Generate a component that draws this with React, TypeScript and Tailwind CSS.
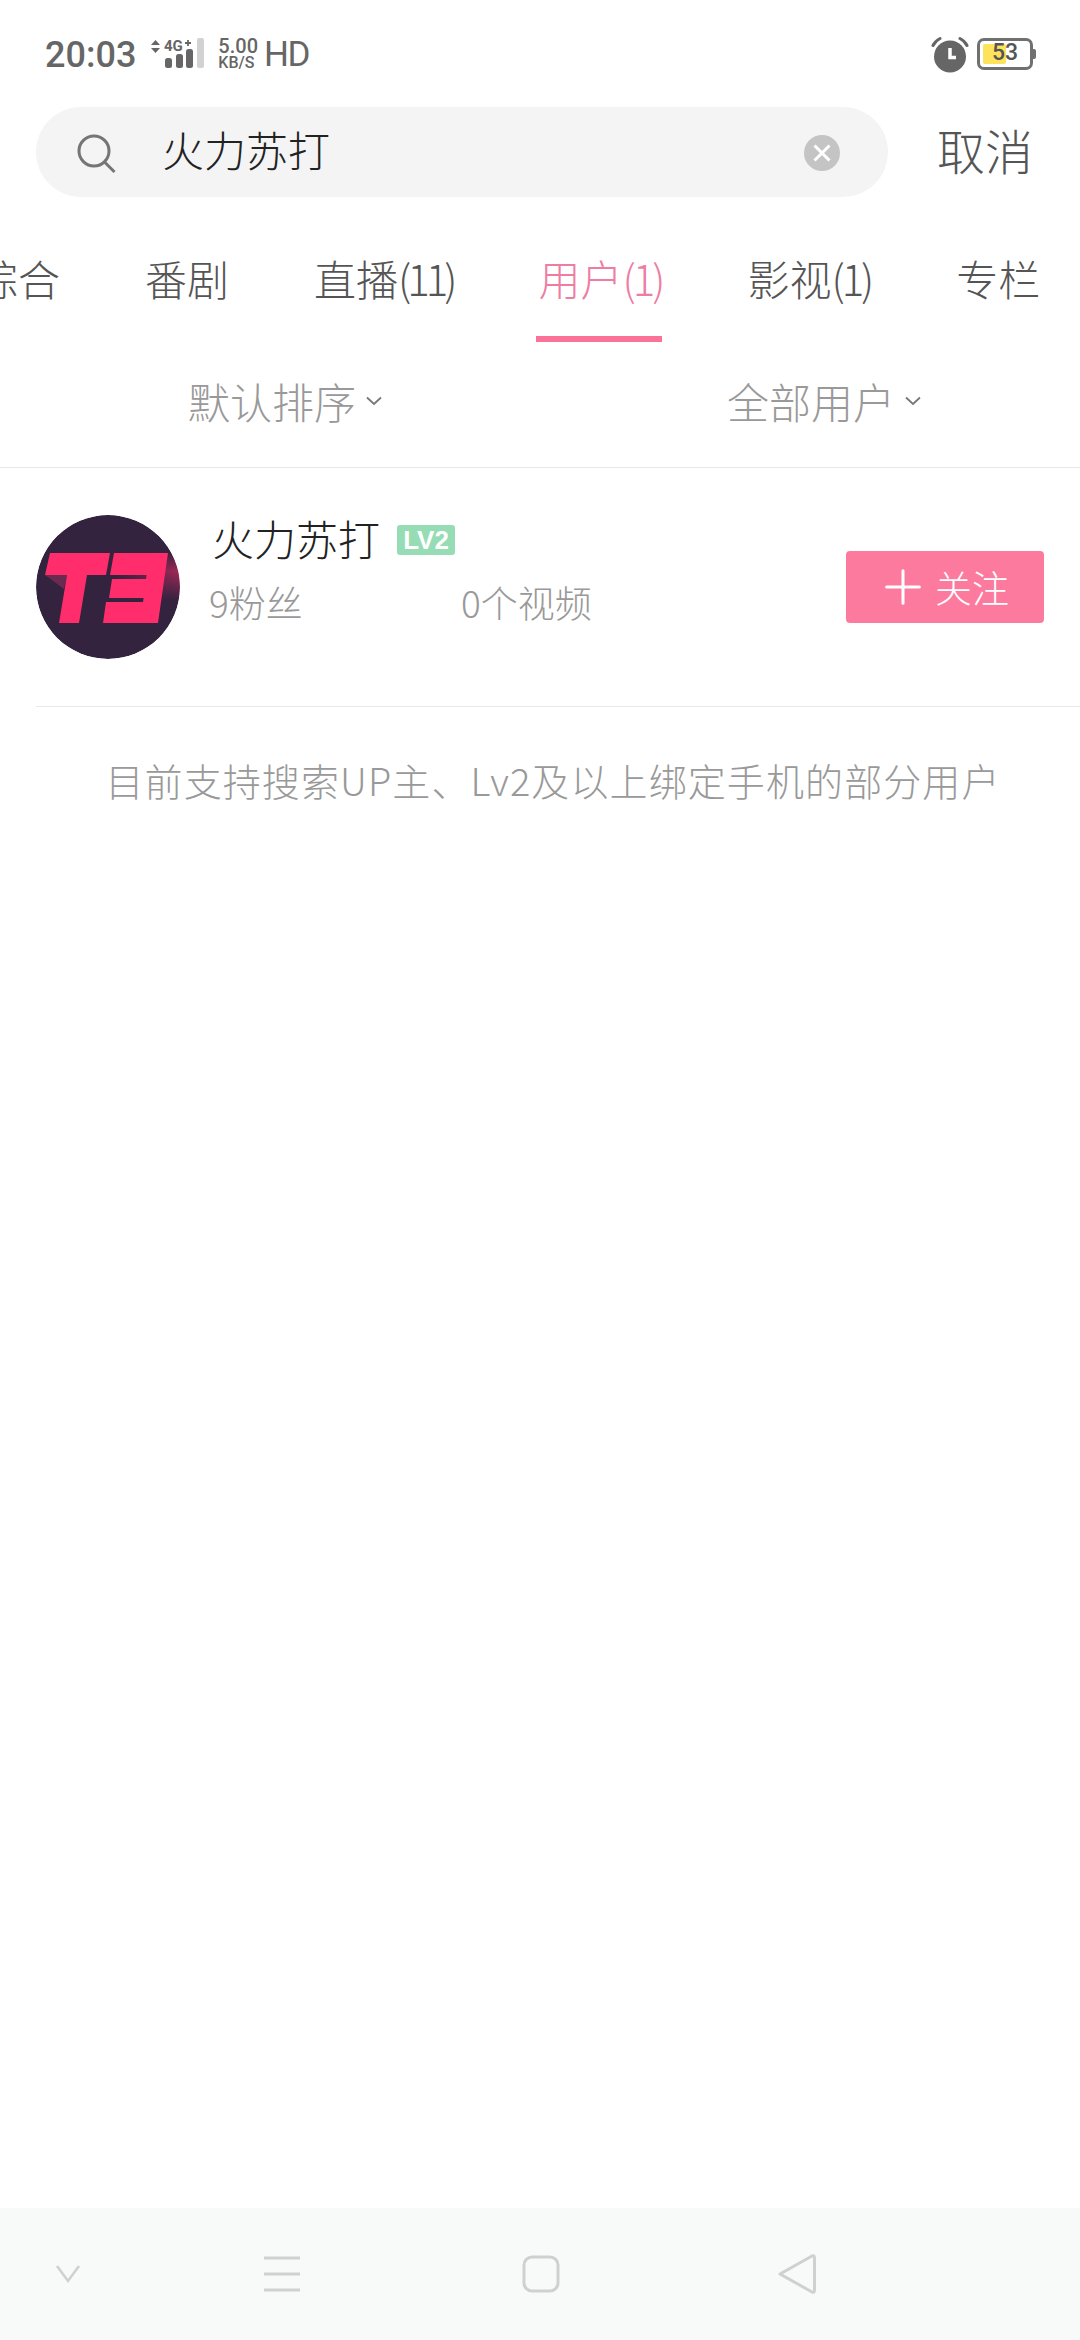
import { Plus } from 'lucide-react';

const tabs = [
  { label: '综合', count: '', tight: '' },
  { label: '番剧', count: '', tight: '' },
  { label: '直播', count: '(11)', tight: 'tracking-[-4px]' },
  { label: '用户', count: '(1)', tight: 'tracking-[-3px]', active: true },
  { label: '影视', count: '(1)', tight: 'tracking-[-3px]' },
  { label: '专栏', count: '', tight: '' },
];

const cjk = "font-['Noto_Sans_CJK_SC','Noto_Sans',sans-serif]";
const roboto = "font-['Roboto',sans-serif]";

function SignalIcon() {
  return (
    <svg width="62" height="34" viewBox="0 0 62 34" className="shrink-0">
      <path d="M3 8l4.500-5 4.500 5zM3 11h9l-4.500 5z" fill="#666" />
      <text x="16" y="14" fontSize="15" fontWeight="700" fill="#666" fontFamily="Roboto, sans-serif">4G</text>
      <path d="M37 6h6M40 3v6" stroke="#666" strokeWidth="1.800" />
      <rect x="17" y="21" width="7" height="10" rx="2.500" fill="#666" />
      <rect x="28" y="17" width="7" height="14" rx="2.500" fill="#666" />
      <rect x="38" y="12" width="7" height="19" rx="2.500" fill="#666" />
      <rect x="49" y="1" width="7" height="30" rx="2" fill="#d2d2d2" />
    </svg>
  );
}

function AlarmIcon() {
  return (
    <svg width="38" height="38" viewBox="0 0 38 38" className="shrink-0">
      <circle cx="19" cy="21.500" r="16" fill="#666" />
      <path d="M2 10.500C3.500 7.500 6 5 9 3.500M36 10.500C34.500 7.500 32 5 29 3.500" stroke="#666" strokeWidth="3" fill="none" strokeLinecap="round" />
      <path d="M19 13v9.500h6" stroke="#fff" strokeWidth="3.500" fill="none" />
    </svg>
  );
}

function Chevron() {
  return (
    <svg width="16" height="10" viewBox="0 0 16 10" className="shrink-0">
      <path d="M1 1.500l7 6.500 7-6.500" stroke="#777" strokeWidth="1.800" fill="none" />
    </svg>
  );
}

function T3Logo() {
  return (
    <svg width="144" height="144" viewBox="0 0 144 144" className="shrink-0 rounded-full">
      <defs>
        <linearGradient id="band" x1="0" y1="0" x2="1" y2="0">
          <stop offset="0.550" stopColor="#ff2d6b" stopOpacity="0" />
          <stop offset="1" stopColor="#ff2d6b" stopOpacity="0.550" />
        </linearGradient>
        <linearGradient id="fade" x1="0" y1="0" x2="0" y2="1">
          <stop offset="0" stopColor="#fff" stopOpacity="0" />
          <stop offset="0.400" stopColor="#fff" stopOpacity="1" />
          <stop offset="1" stopColor="#fff" stopOpacity="0" />
        </linearGradient>
        <mask id="bandMask">
          <rect x="0" y="36" width="144" height="50" fill="url(#fade)" />
        </mask>
      </defs>
      <circle cx="72" cy="72" r="72" fill="#33233f" />
      <rect x="0" y="36" width="144" height="50" fill="url(#band)" mask="url(#bandMask)" />
      <path d="M9 60l22 0-3 14z" fill="#6b2a50" />
      <path d="M14 38h60l-4 22H51l-8 48H23l8-48H9z" fill="#ff2d6b" />
      <path d="M78 38h54l-10 70H67l3-21h37l.6-4H73l3-19h34l.6-4H74z" fill="#ff2d6b" />
    </svg>
  );
}

export default function App() {
  return (
    <div className={`w-[1080px] h-[2340px] bg-white flex flex-col overflow-hidden ${cjk}`}>
      {/* Status bar */}
      <div className={`h-[107px] shrink-0 flex items-center justify-between pl-[45px] pr-[47px] text-[#666] ${roboto}`}>
        <div className="flex items-center">
          <span className="mt-[3px] text-[36px] leading-none font-medium">20:03</span>
          <div className="ml-[12px]"><SignalIcon /></div>
          <div className="ml-[8px] mt-[1px] flex flex-col items-start font-medium">
            <span className="text-[20px] leading-[18px]">5.00</span>
            <span className="text-[16px] leading-[16px]">KB/S</span>
          </div>
          <span className="ml-[6px] mt-[2px] text-[35px] leading-none tracking-[-1.500px]">HD</span>
        </div>
        <div className="flex items-center">
          <AlarmIcon />
          <div className="ml-[8px] w-[56px] h-[32px] rounded-[7px] border-[3px] border-[#707070] relative flex items-center pl-[3px]">
            <div className="w-[23px] h-[20px] bg-[#fde25c] rounded-[2px]" />
            <span className="absolute left-[12px] top-[-1px] text-[23px] leading-[26px] font-medium text-[#555]">53</span>
            <div className="absolute -right-[6px] top-[8px] w-[3px] h-[10px] bg-[#707070] rounded-r-[2px]" />
          </div>
        </div>
      </div>

      {/* Search */}
      <div className="h-[90px] shrink-0 flex items-center pl-[36px]">
        <div className="w-[852px] h-[90px] rounded-full bg-[#f4f4f4] flex items-center pl-[41px] pr-[48px]">
          <svg width="40" height="40" viewBox="0 0 40 40" className="shrink-0 mt-[3px]">
            <circle cx="17" cy="17" r="15" stroke="#757575" strokeWidth="3" fill="none" />
            <path d="M27.500 28l10 10" stroke="#757575" strokeWidth="3" fill="none" />
          </svg>
          <span className="ml-[45px] -mt-[7px] flex-1 text-[42px] leading-none font-light text-[#222]">火力苏打</span>
          <svg width="36" height="36" viewBox="0 0 36 36" className="shrink-0 mt-[2px]">
            <circle cx="18" cy="18" r="18" fill="#c4c4c4" />
            <path d="M10.500 10.500l15 15M25.500 10.500l-15 15" stroke="#fff" strokeWidth="3" />
          </svg>
        </div>
        <span className="ml-[49px] -mt-[6px] text-[48px] leading-none font-light text-[#555]">取消</span>
      </div>

      {/* Tabs */}
      <div className="h-[145px] shrink-0 overflow-hidden">
        <div className="flex -ml-[24px] gap-[85px] pt-[58px] w-[1200px]">
          {tabs.map(t => (
            <div key={t.label} className="relative shrink-0 h-[87px]">
              <span className={`block text-[42px] leading-[46px] font-light ${t.active ? 'text-[#ee7da3]' : 'text-[#555]'}`}>
                {t.label}
                <span className={t.tight}>{t.count}</span>
              </span>
              {t.active && <div className="absolute -left-[2px] right-0 bottom-0 h-[6px] bg-[#fb7299]" />}
            </div>
          ))}
        </div>
      </div>

      {/* Filters */}
      <div className="h-[126px] shrink-0 flex border-b border-[#e8e8e8] pb-[8px] pl-[188px]">
        <div className="flex items-center gap-[10px]">
          <span className="text-[42px] leading-none font-light text-[#999]">默认排序</span>
          <Chevron />
        </div>
        <div className="ml-[345px] flex items-center gap-[10px]">
          <span className="text-[42px] leading-none font-light text-[#999]">全部用户</span>
          <Chevron />
        </div>
      </div>

      {/* User row */}
      <div className="ml-[36px] h-[239px] shrink-0 flex items-center border-b border-[#e8e8e8] pr-[36px]">
        <T3Logo />
        <div className="ml-[32px] flex-1 flex flex-col pb-[36px]">
          <div className="flex items-center">
            <span className="text-[42px] leading-[50px] font-light text-[#222]">火力苏打</span>
            <span className="ml-[17px] mt-[3px] w-[58px] h-[30px] rounded-[3px] bg-[#96dcb4] text-white flex items-center justify-center text-[26px] leading-none font-bold font-['Liberation_Sans',sans-serif]">
              LV2
            </span>
          </div>
          <div className="mt-[16px] flex items-center text-[37px] leading-[46px] font-light text-[#999]">
            <span className="w-[252px] -ml-[3px]">9粉丝</span>
            <span>0个视频</span>
          </div>
        </div>
        <div className="w-[198px] h-[72px] rounded-[4px] bg-[#fd7a9f] flex items-center justify-center gap-[10px] text-white">
          <Plus size={56} strokeWidth={1.300} className="shrink-0 -mx-[6px]" />
          <span className="text-[37px] leading-none font-light">关注</span>
        </div>
      </div>

      {/* Hint */}
      <p className="mt-[51px] text-center pl-[26px] text-[38px] tracking-[1.100px] leading-[44px] font-light text-[#999] whitespace-nowrap">
        目前支持搜索UP主、Lv2及以上绑定手机的部分用户
      </p>

      {/* Nav bar */}
      <div className="mt-auto h-[132px] shrink-0 bg-[#f8f9f9] flex items-center">
        <svg width="26" height="20" viewBox="0 0 26 20" className="ml-[55px] shrink-0">
          <path d="M2 2l11 15 11-15" stroke="#cfd1d1" strokeWidth="2.500" fill="none" />
        </svg>
        <svg width="38" height="38" viewBox="0 0 38 38" className="ml-[182px] shrink-0">
          <path d="M1 3h36M1 19h36M1 35h36" stroke="#cfd1d1" strokeWidth="3" />
        </svg>
        <svg width="38" height="38" viewBox="0 0 38 38" className="ml-[221px] shrink-0">
          <rect x="2" y="2" width="34" height="34" rx="8" stroke="#cfd1d1" strokeWidth="3" fill="none" />
        </svg>
        <svg width="40" height="42" viewBox="0 0 40 42" className="ml-[217px] shrink-0">
          <path d="M3 21L35 3q2.500-1 2.500 2v32q0 3-2.500 2z" stroke="#cfd1d1" strokeWidth="3" fill="none" strokeLinejoin="round" />
        </svg>
      </div>
    </div>
  );
}
